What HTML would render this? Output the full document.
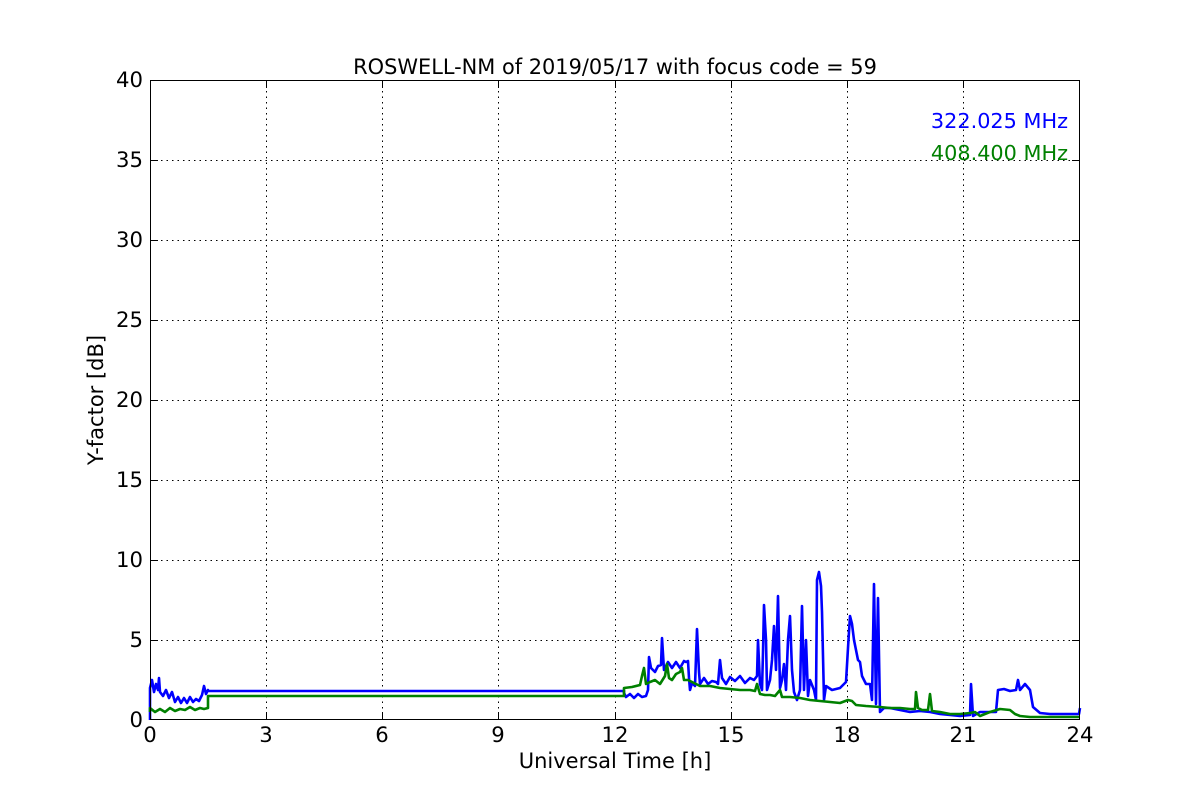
<!DOCTYPE html>
<html><head><meta charset="utf-8"><style>
html,body{margin:0;padding:0;background:#fff;}
svg{display:block;font-family:"DejaVu Sans","Liberation Sans",sans-serif;}
</style></head><body>
<svg width="1200" height="800" viewBox="0 0 1200 800">
<rect width="1200" height="800" fill="#fff"/>
<g stroke="#000" stroke-width="1" stroke-dasharray="1.5,4" fill="none">
<line x1="266.5" y1="80" x2="266.5" y2="720"/><line x1="382.5" y1="80" x2="382.5" y2="720"/>
<line x1="498.5" y1="80" x2="498.5" y2="720"/><line x1="615.5" y1="80" x2="615.5" y2="720"/>
<line x1="731.5" y1="80" x2="731.5" y2="720"/><line x1="847.5" y1="80" x2="847.5" y2="720"/>
<line x1="963.5" y1="80" x2="963.5" y2="720"/>
<line x1="150" y1="160.5" x2="1080" y2="160.5"/><line x1="150" y1="240.5" x2="1080" y2="240.5"/>
<line x1="150" y1="320.5" x2="1080" y2="320.5"/><line x1="150" y1="400.5" x2="1080" y2="400.5"/>
<line x1="150" y1="480.5" x2="1080" y2="480.5"/><line x1="150" y1="560.5" x2="1080" y2="560.5"/>
<line x1="150" y1="640.5" x2="1080" y2="640.5"/>
</g>
<polyline fill="none" stroke="#0000ff" stroke-width="2.6" stroke-linejoin="round" points="150,720 150,688 152,680 154,692 156,684 158,690 159,678 160,692 163,696 166,690 169,698 172,692 175,702 178,697 181,703 184,698 187,703 190,697 193,702 196,699 199,701 202,695 204,686 206,694 208,690 208,691 624,691 624,693 626,697 630,694 634,698 638,694 642,697 646,696 648,690 649,657 651,668 655,672 658,666 661,665 662,638 664,670 668,662 672,668 676,662 680,668 684,661 686,662 688,661 689,678 690,690 692,683 695,686 697,629 699,672 700,684 704,678 708,684 712,681 716,682 718,684 720,660 722,678 726,684 730,677 735,681 740,676 745,683 750,678 754,680 757,676 758,640 760,684 762,690 763,652 764,605 766,640 767,690 770,680 772,660 774,626 776,670 778,596 780,688 782,680 784,664 786,690 788,640 790,616 792,670 794,692 797,700 800,690 802,606 804,690 806,640 808,696 810,680 814,690 816,700 817,580 819,572 821,586 822,612 824,700 826,686 832,690 840,688 846,682 848,648 850,616 852,624 854,640 856,650 858,660 860,662 862,676 866,684 870,684 872,700 874,584 876,704 878,598 880,712 884,708 890,708 900,710 910,712 920,711 930,712 940,714 950,715 960,716 970,715 971,684 973,716 980,712 990,712 996,712 998,690 1004,689 1010,691 1016,690 1018,680 1020,690 1025,684 1030,690 1033,707 1040,713 1050,714 1060,714 1070,714 1079,714 1080,708"/>
<polyline fill="none" stroke="#008000" stroke-width="2.6" stroke-linejoin="round" points="150,712 150,708 155,712 160,709 165,712 170,708 175,711 180,709 185,710 190,707 195,710 200,708 204,709 208,708 208,696 624,696 624,688 632,687 640,685 642,676 644,668 646,684 650,682 655,680 660,684 665,676 667,664 669,678 672,680 676,674 680,672 682,668 684,680 688,680 692,682 700,686 710,686 720,688 730,689 740,690 750,690 755,691 757,684 760,694 765,695 770,695 775,696 780,690 782,697 790,697 800,698 810,700 820,701 830,702 840,703 848,700 852,701 856,705 866,706 880,707 890,708 900,708 910,709 915,709 916,692 918,708 922,710 928,710 930,694 932,711 940,712 950,714 960,714 970,713 975,712 980,716 990,712 1000,709 1010,710 1015,714 1020,716 1030,717 1040,717 1050,717 1060,717 1080,717"/>
<rect x="150.5" y="80.5" width="929" height="639" fill="none" stroke="#000" stroke-width="1"/>
<g stroke="#000" stroke-width="1">
<line x1="266.5" y1="720" x2="266.5" y2="712"/><line x1="382.5" y1="720" x2="382.5" y2="712"/><line x1="498.5" y1="720" x2="498.5" y2="712"/><line x1="615.5" y1="720" x2="615.5" y2="712"/><line x1="731.5" y1="720" x2="731.5" y2="712"/><line x1="847.5" y1="720" x2="847.5" y2="712"/><line x1="963.5" y1="720" x2="963.5" y2="712"/>
<line x1="266.5" y1="80" x2="266.5" y2="88"/><line x1="382.5" y1="80" x2="382.5" y2="88"/><line x1="498.5" y1="80" x2="498.5" y2="88"/><line x1="615.5" y1="80" x2="615.5" y2="88"/><line x1="731.5" y1="80" x2="731.5" y2="88"/><line x1="847.5" y1="80" x2="847.5" y2="88"/><line x1="963.5" y1="80" x2="963.5" y2="88"/>
<line x1="150" y1="160.5" x2="158" y2="160.5"/><line x1="150" y1="240.5" x2="158" y2="240.5"/><line x1="150" y1="320.5" x2="158" y2="320.5"/><line x1="150" y1="400.5" x2="158" y2="400.5"/><line x1="150" y1="480.5" x2="158" y2="480.5"/><line x1="150" y1="560.5" x2="158" y2="560.5"/><line x1="150" y1="640.5" x2="158" y2="640.5"/>
<line x1="1080" y1="160.5" x2="1072" y2="160.5"/><line x1="1080" y1="240.5" x2="1072" y2="240.5"/><line x1="1080" y1="320.5" x2="1072" y2="320.5"/><line x1="1080" y1="400.5" x2="1072" y2="400.5"/><line x1="1080" y1="480.5" x2="1072" y2="480.5"/><line x1="1080" y1="560.5" x2="1072" y2="560.5"/><line x1="1080" y1="640.5" x2="1072" y2="640.5"/>
</g>
<g font-size="21.2" fill="#000" text-anchor="middle">
<text x="150" y="742">0</text><text x="266" y="742">3</text><text x="382" y="742">6</text><text x="498" y="742">9</text><text x="615" y="742">12</text><text x="731" y="742">15</text><text x="847" y="742">18</text><text x="963" y="742">21</text><text x="1080" y="742">24</text>
</g>
<g font-size="21.2" fill="#000" text-anchor="end">
<text x="143" y="727">0</text><text x="143" y="647">5</text><text x="143" y="567">10</text><text x="143" y="487">15</text><text x="143" y="407">20</text><text x="143" y="327">25</text><text x="143" y="247">30</text><text x="143" y="167">35</text><text x="143" y="87">40</text>
</g>
<text x="615" y="768" font-size="21" text-anchor="middle">Universal Time [h]</text>
<text x="0" y="0" font-size="21" text-anchor="middle" transform="translate(103,400) rotate(-90)">Y-factor [dB]</text>
<text x="615" y="74" font-size="20.9" text-anchor="middle">ROSWELL-NM of 2019/05/17 with focus code = 59</text>
<text x="1068" y="128" font-size="20.8" fill="#0000ff" text-anchor="end">322.025 MHz</text>
<text x="1068" y="160" font-size="20.8" fill="#008000" text-anchor="end">408.400 MHz</text>
</svg>
</body></html>
